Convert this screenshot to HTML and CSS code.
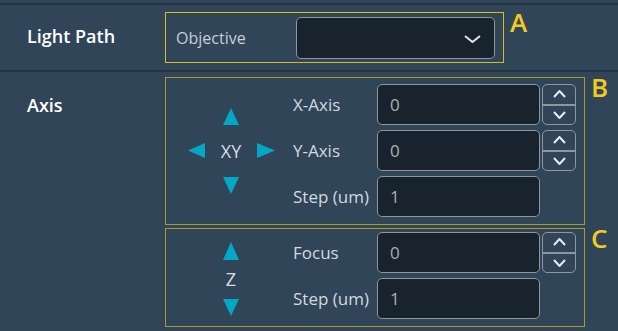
FILE: index.html
```html
<!DOCTYPE html>
<html>
<head>
  <meta charset="utf-8">
  <title>Stage Control</title>
  <link rel="stylesheet" href="styles.css">
</head>
<body>
  <div class="panel">
    <div class="row row-light">
      <div class="row-label">Light Path</div>
      <div class="row-body">
        <div class="group">
          <div class="box box-a">
            <span class="field-label">Objective</span>
            <div class="select">
              <svg width="17" height="8" viewBox="0 0 17 8"><polyline points="1,1 8.5,7 16,1" fill="none" stroke="#e2e6ea" stroke-width="2"/></svg>
            </div>
          </div>
          <span class="tag">A</span>
        </div>
      </div>
    </div>
    <div class="row row-axis">
      <div class="row-label">Axis</div>
      <div class="row-body stack">
        <div class="group">
          <div class="box box-b">
            <div class="pad-col">
              <div class="pad-xy">
                <span></span>
                <svg width="16" height="17" viewBox="0 0 16 17"><polygon points="8,0 16,17 0,17" fill="#05a7c6"/></svg>
                <span></span>
                <svg width="17" height="15" viewBox="0 0 17 15"><polygon points="0,7.5 17,0 17,15" fill="#05a7c6"/></svg>
                <span class="pad-text">XY</span>
                <svg width="18" height="15" viewBox="0 0 18 15"><polygon points="18,7.5 0,0 0,15" fill="#05a7c6"/></svg>
                <span></span>
                <svg width="16" height="17" viewBox="0 0 16 17"><polygon points="0,0 16,0 8,17" fill="#05a7c6"/></svg>
                <span></span>
              </div>
            </div>
            <div class="fields">
              <span class="field-name">X-Axis</span>
              <div class="input">0</div>
              <div class="spin">
                <div class="spin-btn"><svg width="13" height="8" viewBox="0 0 13 8"><polyline points="1,7 6.5,1 12,7" fill="none" stroke="#e8ecef" stroke-width="2"/></svg></div>
                <div class="spin-btn spin-down"><svg width="13" height="8" viewBox="0 0 13 8"><polyline points="1,1 6.5,7 12,1" fill="none" stroke="#e8ecef" stroke-width="2"/></svg></div>
              </div>
              <span class="field-name">Y-Axis</span>
              <div class="input">0</div>
              <div class="spin">
                <div class="spin-btn"><svg width="13" height="8" viewBox="0 0 13 8"><polyline points="1,7 6.5,1 12,7" fill="none" stroke="#e8ecef" stroke-width="2"/></svg></div>
                <div class="spin-btn spin-down"><svg width="13" height="8" viewBox="0 0 13 8"><polyline points="1,1 6.5,7 12,1" fill="none" stroke="#e8ecef" stroke-width="2"/></svg></div>
              </div>
              <span class="field-name">Step (um)</span>
              <div class="input">1</div>
              <span></span>
            </div>
          </div>
          <span class="tag">B</span>
        </div>
        <div class="group">
          <div class="box box-c">
            <div class="pad-col">
              <div class="pad-z">
                <svg width="16" height="18" viewBox="0 0 16 18"><polygon points="8,0 16,18 0,18" fill="#05a7c6"/></svg>
                <span class="pad-text">Z</span>
                <svg width="16" height="17" viewBox="0 0 16 17"><polygon points="0,0 16,0 8,17" fill="#05a7c6"/></svg>
              </div>
            </div>
            <div class="fields">
              <span class="field-name">Focus</span>
              <div class="input">0</div>
              <div class="spin">
                <div class="spin-btn"><svg width="13" height="8" viewBox="0 0 13 8"><polyline points="1,7 6.5,1 12,7" fill="none" stroke="#e8ecef" stroke-width="2"/></svg></div>
                <div class="spin-btn spin-down"><svg width="13" height="8" viewBox="0 0 13 8"><polyline points="1,1 6.5,7 12,1" fill="none" stroke="#e8ecef" stroke-width="2"/></svg></div>
              </div>
              <span class="field-name">Step (um)</span>
              <div class="input">1</div>
              <span></span>
            </div>
          </div>
          <span class="tag">C</span>
        </div>
      </div>
    </div>
  </div>
</body>
</html>
```

FILE: styles.css
```css
body {
  margin: 0;
  background: #304558;
  font-family: "Open Sans", "Noto Sans", sans-serif;
  color: #d3d9de;
  overflow: hidden;
}
.panel
{
  margin-top: 3px;
}
.row
{
  display: flex;
  border-top: 2px solid #223344;
}
.row-light
{
  padding: 7px 0 7px;
  align-items: center;
}
.row-axis
{
  padding-top: 5px;
}
.row-label
{
  width: 138px;
  padding-left: 27px;
  font-size: 18px;
  font-weight: 600;
  color: #ffffff;
}
.row-light .row-label
{
  margin-top: -4px;
}
.row-axis .row-label
{
  padding-top: 16px;
}
.row-body.stack
{
  display: flex;
  flex-direction: column;
  gap: 3px;
}
.group
{
  display: flex;
  align-items: flex-start;
  gap: 6px;
}
.tag
{
  font-size: 26px;
  font-weight: 600;
  line-height: 26px;
  color: #f3cc1b;
  margin-top: -3px;
}
.box
{
  display: flex;
  box-sizing: border-box;
  border: 1px solid #aa9c2c;
}
.box-a
{
  width: 339px;
  height: 51px;
  padding: 4px 8px 3px 10px;
  align-items: center;
  border-color: #d8bd1c;
}
.field-label
{
  width: 120px;
  font-size: 16px;
  color: #c9d0d6;
}
.select
{
  box-sizing: border-box;
  width: 199px;
  height: 42px;
  background: #19232d;
  border: 1px solid #8f969c;
  border-radius: 5px;
  display: flex;
  align-items: center;
  justify-content: flex-end;
  padding-right: 13px;
  padding-top: 2px;
}
.box-b
{
  width: 420px;
  padding: 6px 7px 7px 0;
}
.box-c
{
  width: 420px;
  padding: 3px 7px 7px 0;
}
.pad-col
{
  width: 127px;
  display: flex;
  align-items: center;
}
.pad-xy
{
  margin-left: 22px;
  display: grid;
  grid-template-columns: 17px 52px 18px;
  grid-template-rows: 17px 52px 17px;
  align-items: center;
  justify-items: center;
}
.pad-z
{
  margin-left: 57px;
  display: flex;
  flex-direction: column;
  align-items: center;
  margin-top: 6px;
}
.pad-z .pad-text
{
  height: 39px;
  line-height: 39px;
}
.pad-text
{
  font-size: 18px;
  color: #d8dde2;
}
.pad-xy svg, .pad-z svg
{
  display: block;
}
.fields
{
  display: grid;
  grid-template-columns: 84px 163px 36px;
  grid-auto-rows: 41px;
  row-gap: 5px;
  align-items: center;
}
.field-name
{
  font-size: 17px;
  color: #d3d9de;
}
.input
{
  box-sizing: border-box;
  height: 41px;
  background: #19232d;
  border: 1px solid #8f969c;
  border-radius: 5px;
  padding-left: 12px;
  line-height: 39px;
  font-size: 17px;
  color: #a8b0b8;
}
.spin
{
  box-sizing: border-box;
  height: 41px;
  margin-left: 2px;
  border: 1px solid #8f969c;
  border-radius: 5px;
  display: flex;
  flex-direction: column;
}
.spin-btn
{
  flex: 1;
  display: flex;
  align-items: center;
  justify-content: center;
}
.spin-down
{
  border-top: 2px solid #8f969c;
}
.spin-btn svg
{
  display: block;
}
```
